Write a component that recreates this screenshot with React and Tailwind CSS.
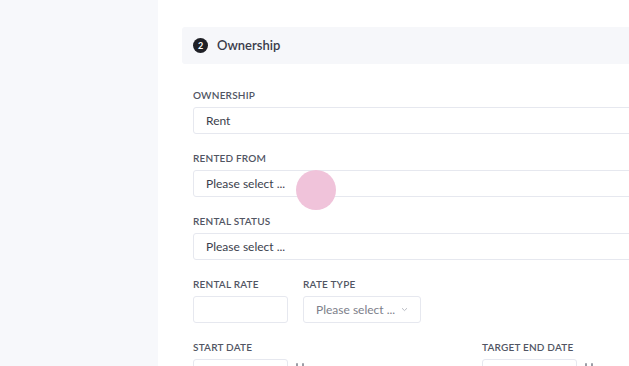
import React from 'react';

const font = { fontFamily: 'Lato, "Noto Sans", sans-serif' };

const Label = ({ children }) => (
    <div className="h-[12px] text-[10px] leading-[12px] font-semibold uppercase tracking-[0.2px] text-[#515563] mb-[6px]">
        {children}
    </div>
);

const WideInput = ({ value }) => (
    <div className="h-[27px] w-[520px] rounded-[3px] border border-[#e6e8ef] bg-white flex items-center pl-[12px] text-[12px] text-[#3b3e4c]">
        {value}
    </div>
);

// two small stubs peeking out below the fold, top of the calendar icon
const CalendarStub = () => (
    <div className="flex gap-[4px] ml-[8px] pt-[4px]">
        <span className="w-[2px] h-[4px] bg-[#9a9da6] rounded-[1px]"></span>
        <span className="w-[2px] h-[4px] bg-[#9a9da6] rounded-[1px]"></span>
    </div>
);

const App = () => {
    return (
        <div className="relative flex w-[629px] h-[366px] overflow-hidden bg-white" style={font}>
            {/* Sidebar */}
            <aside className="w-[158px] shrink-0 bg-[#f7f8fb]"></aside>

            {/* Main */}
            <main className="flex-1 pt-[27px] pl-[24px]">
                {/* Section header */}
                <div className="h-[37px] w-[520px] bg-[#f6f7fa] rounded-l-[3px] flex items-center pl-[11px]">
                    <span className="w-[15px] h-[15px] rounded-full bg-[#1f2026] text-white text-[9px] font-bold flex items-center justify-center">2</span>
                    <span className="ml-[9px] text-[13px] font-semibold text-[#3a3c4a]">Ownership</span>
                </div>

                {/* Form */}
                <div className="pl-[11px] pt-[25px] flex flex-col gap-[18px]">
                    <div>
                        <Label>Ownership</Label>
                        <WideInput value="Rent" />
                    </div>
                    <div>
                        <Label>Rented From</Label>
                        <WideInput value="Please select ..." />
                    </div>
                    <div>
                        <Label>Rental Status</Label>
                        <WideInput value="Please select ..." />
                    </div>
                    <div className="flex gap-[15px]">
                        <div>
                            <Label>Rental Rate</Label>
                            <div className="h-[27px] w-[95px] rounded-[3px] border border-[#e6e8ef]"></div>
                        </div>
                        <div>
                            <Label>Rate Type</Label>
                            <div className="h-[27px] w-[118px] rounded-[3px] border border-[#e6e8ef] flex items-center pl-[12px] pr-[12px] text-[12px] text-[#7d808a]">
                                <span className="flex-1">Please select ...</span>
                                <svg width="7" height="5" viewBox="0 0 7 5" fill="none">
                                    <path d="M1 1.2 3.5 3.6 6 1.2" stroke="#b9bcc4" strokeWidth="1" />
                                </svg>
                            </div>
                        </div>
                    </div>
                    <div className="flex">
                        <div className="w-[289px]">
                            <Label>Start Date</Label>
                            <div className="flex">
                                <div className="h-[27px] w-[95px] rounded-[3px] border border-[#e6e8ef]"></div>
                                <CalendarStub />
                            </div>
                        </div>
                        <div>
                            <Label>Target End Date</Label>
                            <div className="flex">
                                <div className="h-[27px] w-[95px] rounded-[3px] border border-[#e6e8ef]"></div>
                                <CalendarStub />
                            </div>
                        </div>
                    </div>
                </div>
            </main>

            {/* Click indicator */}
            <div className="absolute left-[296px] top-[170px] w-[40px] h-[40px] rounded-full bg-[#f0c3da] pointer-events-none"></div>
        </div>
    );
};

export default App;
